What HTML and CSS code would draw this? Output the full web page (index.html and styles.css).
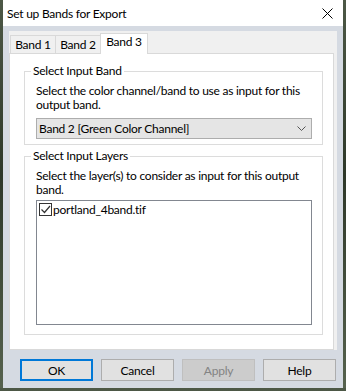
FILE: index.html
```html
<!DOCTYPE html>
<html lang="en">
  <head>
    <meta charset="UTF-8" />
    <title>Set up Bands for Export</title>
    <link rel="stylesheet" href="styles.css">
  </head>
  <body>
    <div class="window">
      <div class="titlebar">
        <span class="title">Set up Bands for Export</span>
        <svg class="close-icon" width="11" height="11" viewBox="0 0 11 11">
          <path d="M0.5 0.5L10.5 10.5M10.5 0.5L0.5 10.5" stroke="#000" stroke-width="1" fill="none" />
        </svg>
      </div>

      <div class="client">
        <div class="tabctl">
          <div class="tabs">
            <div class="tab">Band 1</div>
            <div class="tab">Band 2</div>
            <div class="tab active">Band 3</div>
          </div>

          <div class="tabpage">
            <fieldset class="group group-band">
              <legend>Select Input Band</legend>
              <p class="hint">Select the color channel/band to use as input for this output band.</p>
              <div class="combo">
                <span>Band 2 [Green Color Channel]</span>
                <svg width="9" height="5" viewBox="0 0 9 5">
                  <path d="M0.5 0.5L4.5 4.5L8.5 0.5" stroke="#555" stroke-width="1" fill="none" />
                </svg>
              </div>
            </fieldset>

            <fieldset class="group group-layers">
              <legend>Select Input Layers</legend>
              <p class="hint">Select the layer(s) to consider as input for this output band.</p>
              <div class="listbox">
                <div class="item">
                  <span class="check">
                    <svg width="11" height="11" viewBox="0 0 11 11">
                      <path d="M1.5 5.5L4.5 8.5L10 2" stroke="#333" stroke-width="1.2" fill="none" />
                    </svg>
                  </span>
                  <span>portland_4band.tif</span>
                </div>
              </div>
            </fieldset>
          </div>
        </div>

        <div class="buttons">
          <button class="btn btn-default">OK</button>
          <button class="btn">Cancel</button>
          <button class="btn" disabled>Apply</button>
          <button class="btn">Help</button>
        </div>
      </div>
    </div>
  </body>
</html>
```

FILE: styles.css
```css
body {
  margin: 0;
  background: linear-gradient(180deg, #4d5846 0%, #2e3829 45%, #56624e 100%);
  font-family: Lato, "Segoe UI", sans-serif;
  font-size: 12px;
  letter-spacing: -0.25px;
  color: #000;
}

.window {
  width: 340px;
  height: 388px;
  margin-left: 3px;
  background-color: #d5dae2;
  display: flex;
  flex-direction: column;
}

.titlebar {
  height: 26px;
  background-color: #fff;
  display: flex;
  align-items: center;
  justify-content: space-between;
  padding: 0 10px 0 4px;
}

.client {
  flex: 1;
  padding: 5px 6px 0 6px;
}

.tabctl {
  background-color: #f0f0f0;
  padding-right: 3px;
}

.tabs {
  display: flex;
  align-items: flex-end;
  height: 22px;
  padding-left: 1px;
}

.tab {
  box-sizing: border-box;
  height: 18px;
  width: 46px;
  line-height: 17px;
  text-align: center;
  border: 1px solid #d9d9d9;
  border-bottom: none;
  margin-right: -1px;
}

.tab.active {
  height: 21px;
  width: 48px;
  line-height: 16px;
  background-color: #fff;
  margin-bottom: -1px;
  position: relative;
}

.tabpage {
  box-sizing: border-box;
  height: 297px;
  background-color: #fff;
  border: 1px solid #d9d9d9;
  padding: 10px 10px 0 14px;
}

.group {
  margin: 0;
  border: 1px solid #dcdcdc;
  padding: 0 10px 5px 11px;
}

.group legend {
  padding: 0 2px;
  margin-left: -5px;
  line-height: 14px;
}

.group-layers {
  margin-top: 4px;
  padding-bottom: 9px;
}

.hint {
  margin: 6px 0 0;
  line-height: 14px;
}

.combo {
  box-sizing: border-box;
  margin-top: 6px;
  height: 21px;
  border: 1px solid #adadad;
  background-color: #e5e5e5;
  display: flex;
  align-items: center;
  justify-content: space-between;
  padding: 0 5px 0 2px;
}

.listbox {
  box-sizing: border-box;
  margin-top: 3px;
  height: 125px;
  border: 1px solid #828790;
  padding: 0 2px;
}

.item {
  display: flex;
  align-items: center;
  height: 17px;
  gap: 1px;
}

.check {
  box-sizing: border-box;
  width: 13px;
  height: 13px;
  border: 1px solid #333;
  display: flex;
  align-items: center;
  justify-content: center;
}

.buttons {
  display: flex;
  justify-content: flex-end;
  gap: 8px;
  margin-top: 9px;
  padding-right: 1px;
}

.btn {
  box-sizing: border-box;
  width: 73px;
  height: 22px;
  border: 1px solid #adadad;
  background-color: #e1e1e1;
  font-family: inherit;
  font-size: 12px;
  letter-spacing: inherit;
  color: #000;
  padding: 0;
}

.btn-default {
  border: 2px solid #0078d7;
}

.btn:disabled {
  background-color: #cccccc;
  border-color: #bfbfbf;
  color: #838383;
}
```
